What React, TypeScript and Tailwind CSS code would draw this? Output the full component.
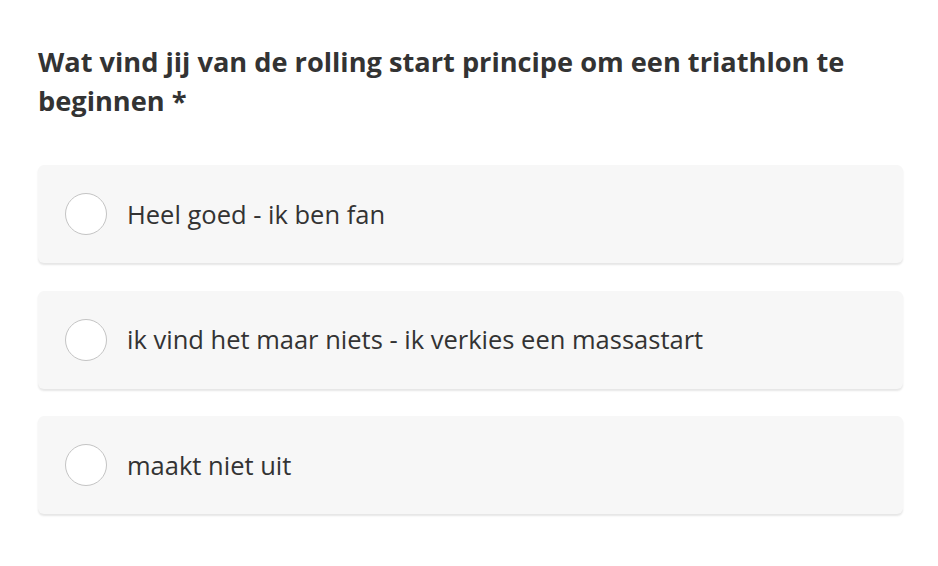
const options = [
  'Heel goed - ik ben fan',
  'ik vind het maar niets - ik verkies een massastart',
  'maakt niet uit',
]

export default function App() {
  return (
    <div className="w-[938px] h-[566px] bg-white px-[38px] pt-[42px]" style={{ fontFamily: '"Open Sans", sans-serif' }}>
      <h2 className="text-[27.2px] leading-[39px] font-bold text-[#333333] pr-6">
        Wat vind jij van de rolling start principe om een triathlon te beginnen *
      </h2>
      <div className="mt-[45px] flex flex-col gap-[27.5px] w-[865px]">
        {options.map(o => (
          <label key={o} className="h-[98px] rounded-md bg-[#f7f7f7] shadow-[0_2px_2px_rgba(0,0,0,0.1)] flex items-center pl-[27px] gap-[20px] cursor-pointer">
            <span className="w-[42px] h-[42px] rounded-full bg-white border-[1.5px] border-[#c4c4c4] shrink-0" />
            <span className="text-[25.5px] text-[#333333]">{o}</span>
          </label>
        ))}
      </div>
    </div>
  )
}
